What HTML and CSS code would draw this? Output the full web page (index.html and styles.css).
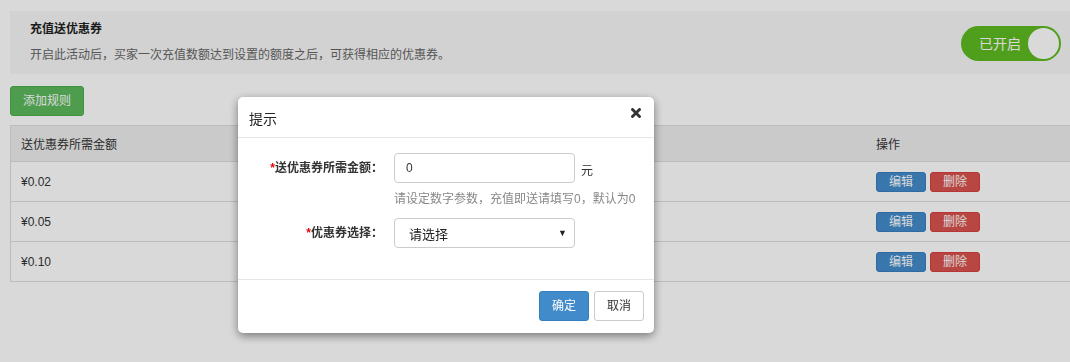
FILE: index.html
```html
<!DOCTYPE html>
<html lang="zh-CN">
<head>
  <meta charset="UTF-8">
  <title>充值送优惠券</title>
  <link rel="stylesheet" href="styles.css">
</head>
<body>
  <div class="page">
    <div class="activity">
      <div class="activity-info">
        <h3>充值送优惠券</h3>
        <p>开启此活动后，买家一次充值数额达到设置的额度之后，可获得相应的优惠券。</p>
      </div>
      <div class="switch on">
        <span class="switch-text">已开启</span>
        <span class="switch-knob"></span>
      </div>
    </div>

    <button class="btn btn-success btn-add">添加规则</button>

    <table class="rules">
      <thead>
        <tr>
          <th>送优惠券所需金额</th>
          <th class="col-ops">操作</th>
        </tr>
      </thead>
      <tbody>
        <tr>
          <td>¥0.02</td>
          <td class="col-ops"><button class="btn btn-xs btn-primary">编辑</button><button class="btn btn-xs btn-danger">删除</button></td>
        </tr>
        <tr>
          <td>¥0.05</td>
          <td class="col-ops"><button class="btn btn-xs btn-primary">编辑</button><button class="btn btn-xs btn-danger">删除</button></td>
        </tr>
        <tr>
          <td>¥0.10</td>
          <td class="col-ops"><button class="btn btn-xs btn-primary">编辑</button><button class="btn btn-xs btn-danger">删除</button></td>
        </tr>
      </tbody>
    </table>
  </div>

  <div class="backdrop"></div>

  <div class="modal">
    <div class="modal-header">
      <h4>提示</h4>
      <button class="close" aria-label="关闭">
        <svg width="10" height="10" viewBox="0 0 10 10"><path d="M1.5 1.5L8.5 8.5M8.5 1.5L1.5 8.5" stroke="#333" stroke-width="2.8" stroke-linecap="square"/></svg>
      </button>
    </div>
    <div class="modal-body">
      <div class="form-row">
        <label><span class="req">*</span>送优惠券所需金额：</label>
        <div class="control">
          <div class="input-line">
            <input type="text" class="form-input" value="0">
            <span class="unit">元</span>
          </div>
          <p class="help">请设定数字参数，充值即送请填写0，默认为0</p>
        </div>
      </div>
      <div class="form-row">
        <label><span class="req">*</span>优惠券选择：</label>
        <div class="control">
          <div class="form-select">
            <span>请选择</span>
            <span class="caret">▼</span>
          </div>
        </div>
      </div>
    </div>
    <div class="modal-footer">
      <button class="btn btn-primary btn-md">确定</button>
      <button class="btn btn-default btn-md">取消</button>
    </div>
  </div>
</body>
</html>
```

FILE: styles.css
```css
body {
  margin: 0;
  font-family: "Liberation Sans", "Noto Sans CJK SC", sans-serif;
  font-size: 12px;
  color: #333;
  background: #fff;
}

.page {
  padding: 11px 0 0 10px;
}

.activity {
  display: flex;
  align-items: center;
  justify-content: space-between;
  background: #f7f7f7;
  height: 63px;
  padding: 0 9px 0 20px;
}

.activity-info h3 {
  margin: 0;
  font-size: 12px;
  font-weight: bold;
  color: #222;
  line-height: 17px;
}

.activity-info p {
  margin: 9px 0 0;
  color: #666;
  line-height: 17px;
}

.switch {
  display: flex;
  align-items: center;
  justify-content: space-between;
  box-sizing: border-box;
  width: 100px;
  height: 35px;
  border-radius: 18px;
  background: #5dba22;
  padding: 0 2px 0 18px;
  margin-top: 1px;
}

.switch-text {
  color: #fff;
  font-size: 14px;
}

.switch-knob {
  width: 31px;
  height: 31px;
  border-radius: 50%;
  background: #fff;
}

.btn {
  font-family: inherit;
  border: 1px solid transparent;
  border-radius: 3px;
  cursor: pointer;
  color: #fff;
  line-height: 1;
}

.btn-add {
  display: block;
  margin-top: 12px;
  height: 30px;
  padding: 0 12px;
  font-size: 12px;
}

.btn-success { background: #5cb85c; border-color: #4cae4c; }
.btn-primary { background: #428bca; border-color: #357ebd; }
.btn-danger  { background: #d9534f; border-color: #d43f3a; }
.btn-default { background: #fff; border-color: #ccc; color: #333; }

.btn-xs {
  width: 50px;
  height: 20px;
  font-size: 12px;
  padding: 0;
  margin-right: 4px;
}

.rules {
  width: 100%;
  margin-top: 9px;
  border-collapse: collapse;
  border: 1px solid #ddd;
  border-right: none;
}

.rules th,
.rules td {
  text-align: left;
  padding: 0 10px;
  border-bottom: 1px solid #ddd;
}

.rules th {
  background: #eee;
  font-weight: normal;
  height: 35px;
}

.rules td {
  height: 39px;
}

.rules .col-ops {
  width: 184px;
  font-size: 0;
}

.rules th.col-ops {
  font-size: 12px;
}

.backdrop {
  position: fixed;
  inset: 0;
  background: rgba(0, 0, 0, 0.15);
}

.modal {
  position: fixed;
  top: 97px;
  left: 238px;
  width: 416px;
  background: #fff;
  border-radius: 5px;
  box-shadow: 0 3px 10px rgba(0, 0, 0, 0.45);
}

.modal-header {
  display: flex;
  justify-content: space-between;
  align-items: center;
  height: 40px;
  padding: 0 13px 0 11px;
  border-bottom: 1px solid #e5e5e5;
}

.modal-header h4 {
  margin: 2px 0 0;
  font-size: 14px;
  font-weight: normal;
  color: #222;
}

.close {
  border: none;
  background: none;
  padding: 0;
  margin-top: -9px;
  line-height: 0;
}

.modal-body {
  padding: 15px 0 31px;
  display: flex;
  flex-direction: column;
  gap: 10px;
}

.form-row {
  display: grid;
  grid-template-columns: 145px 1fr;
  column-gap: 11px;
}

.form-row label {
  text-align: right;
  font-weight: bold;
  color: #333;
  line-height: 30px;
}

.req {
  color: #e00;
}

.input-line {
  display: flex;
  align-items: center;
  gap: 6px;
}

.form-input,
.form-select {
  box-sizing: border-box;
  width: 181px;
  height: 30px;
  border: 1px solid #ccc;
  border-radius: 4px;
  font-family: inherit;
  font-size: 12px;
  color: #333;
}

.form-input {
  padding: 0 11px;
}

.unit {
  font-size: 12px;
  margin-top: 3px;
}

.help {
  margin: 8px 0 0;
  color: #888;
  line-height: 17px;
}

.form-select {
  display: flex;
  align-items: center;
  justify-content: space-between;
  padding: 0 7px 0 14px;
  font-size: 13px;
  color: #222;
}

.caret {
  font-size: 9px;
  color: #222;
}

.modal-footer {
  display: flex;
  justify-content: flex-end;
  gap: 5px;
  padding: 11px 10px 12px;
  border-top: 1px solid #e5e5e5;
}

.btn-md {
  width: 50px;
  height: 30px;
  font-size: 12px;
  padding: 0;
}
```
